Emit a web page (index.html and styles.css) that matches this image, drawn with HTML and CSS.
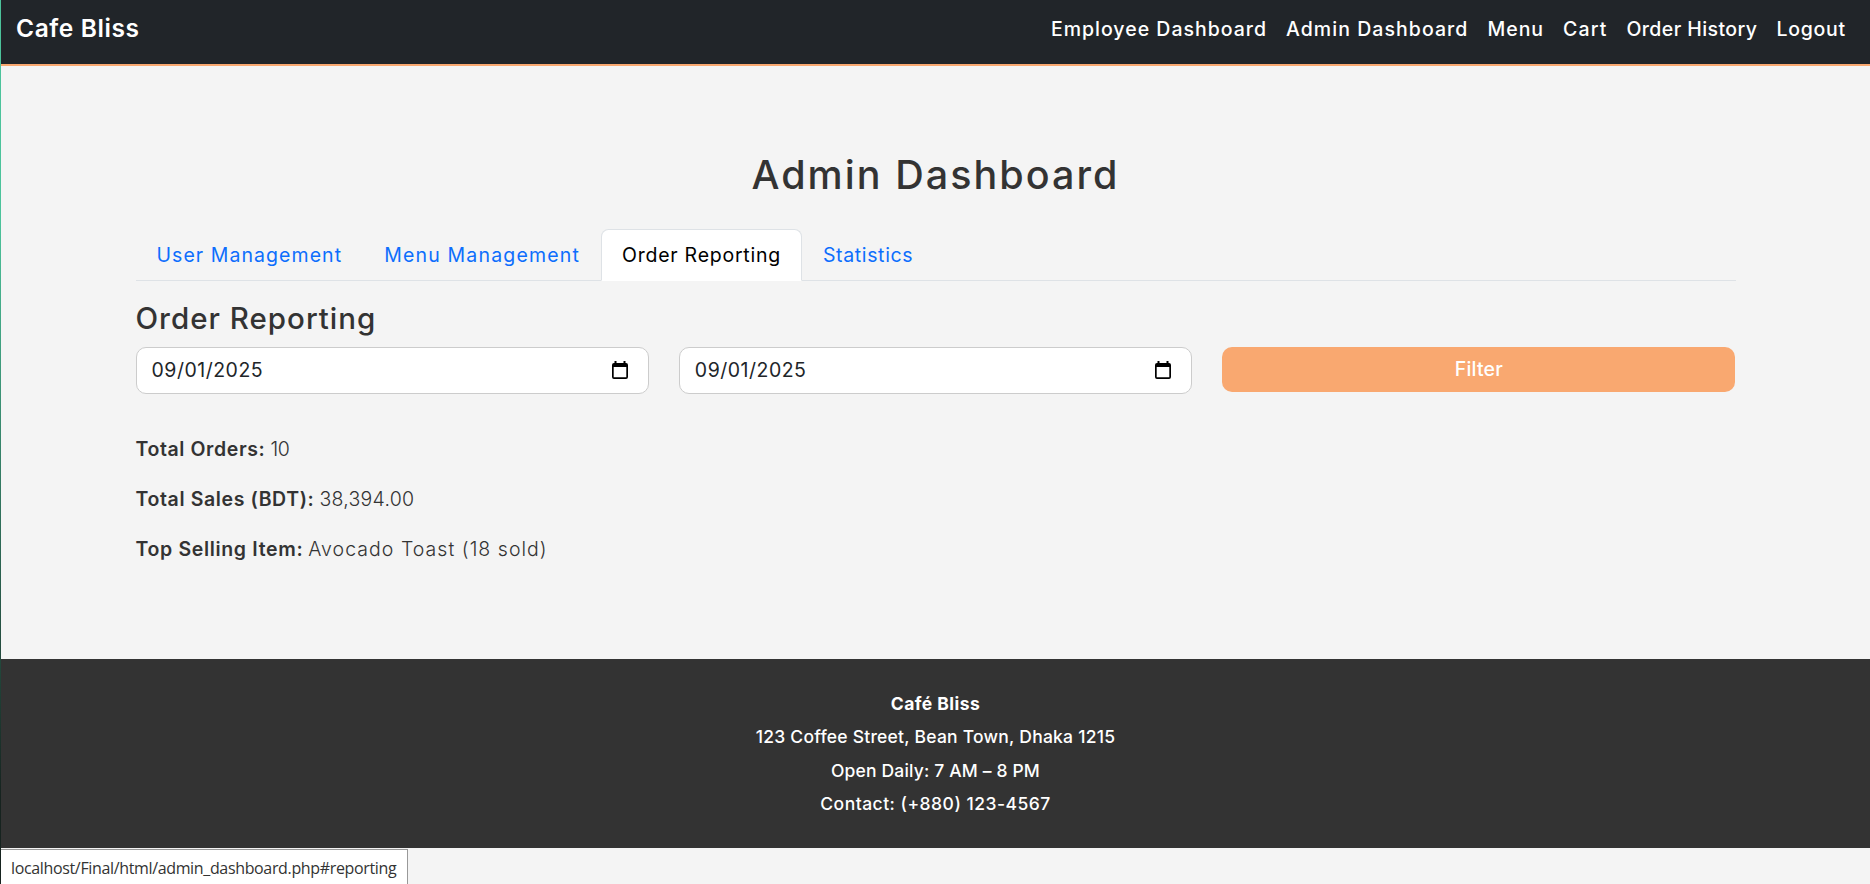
FILE: index.html
```
<!DOCTYPE html>
<html lang="en">
<head>
<meta charset="utf-8">
<title>Cafe Bliss - Admin Dashboard</title>
<link rel="stylesheet" href="styles.css">
</head>
<body>
<nav class="navbar">
  <a class="brand">Cafe Bliss</a>
  <div class="nav-links">
    <a class="l-employee">Employee Dashboard</a>
    <a class="l-admin">Admin Dashboard</a>
    <a class="l-menu">Menu</a>
    <a class="l-cart">Cart</a>
    <a class="l-history">Order History</a>
    <a class="l-logout">Logout</a>
  </div>
</nav>
<main class="container">
  <h2 class="title">Admin Dashboard</h2>
  <div class="tabs">
    <a class="tab t-user">User Management</a>
    <a class="tab t-menu">Menu Management</a>
    <a class="tab t-order active">Order Reporting</a>
    <a class="tab t-stats">Statistics</a>
  </div>
  <h4 class="heading">Order Reporting</h4>
  <form class="filters">
    <div class="date"><span>09/01/2025</span>
      <svg class="cal" viewBox="0 0 16 18"><path d="M2.5 0h2v2h7V0h2v2H14a2 2 0 0 1 2 2v12a2 2 0 0 1-2 2H2a2 2 0 0 1-2-2V4a2 2 0 0 1 2-2h.5zM1.7 6v10.3h12.6V6z" fill-rule="evenodd"/></svg>
    </div>
    <div class="date"><span>09/01/2025</span>
      <svg class="cal" viewBox="0 0 16 18"><path d="M2.5 0h2v2h7V0h2v2H14a2 2 0 0 1 2 2v12a2 2 0 0 1-2 2H2a2 2 0 0 1-2-2V4a2 2 0 0 1 2-2h.5zM1.7 6v10.3h12.6V6z" fill-rule="evenodd"/></svg>
    </div>
    <button class="btn" type="button">Filter</button>
  </form>
  <div class="summary">
    <p><strong class="s-orders">Total Orders:</strong><span class="v-orders">10</span></p>
    <p><strong class="s-sales">Total Sales (BDT):</strong><span class="v-sales">38,394.00</span></p>
    <p><strong class="s-top">Top Selling Item:</strong><span class="v-top">Avocado Toast (18 sold)</span></p>
  </div>
</main>
<footer class="footer">
  <p class="f-name">Café Bliss</p>
  <p class="f-street">123 Coffee Street, Bean Town, Dhaka 1215</p>
  <p class="f-open">Open Daily: 7 AM – 8 PM</p>
  <p class="f-contact">Contact: (+880) 123-4567</p>
</footer>
<div class="edge"></div>
<div class="status">localhost/Final/html/admin_dashboard.php#reporting</div>
</body>
</html>
```
FILE: styles.css
```
* { box-sizing: border-box; }
body {
  margin: 0;
  padding-left: 1px;
  height: 884px;
  overflow: hidden;
  background: #f4f4f4;
  color: #333;
  font: 400 19.5px/30px Inter, "Liberation Sans", sans-serif;
}
h2, h4, p { margin: 0; }

.navbar {
  display: flex;
  justify-content: space-between;
  align-items: flex-start;
  height: 66px;
  padding: 13px 24px 0 15px;
  background: #212529;
  border-bottom: 2px solid #f9a870;
  color: #fff;
}
.brand { font-size: 24.5px; font-weight: 600; letter-spacing: .6px; }
.nav-links { display: flex; gap: 19px; padding-top: 1px; font-weight: 500; }
.l-employee { letter-spacing: 1px; }
.l-admin { letter-spacing: 1.05px; }
.l-menu { letter-spacing: 1px; }
.l-cart { letter-spacing: 1.1px; }
.l-history { letter-spacing: .42px; }
.l-logout { letter-spacing: .75px; }

.container { width: 1600px; margin: 0 auto; padding-top: 85px; height: 593px; }
.title {
  height: 48px;
  margin-bottom: 30px;
  text-align: center;
  font-size: 39.5px;
  line-height: 48px;
  font-weight: 500;
  letter-spacing: 2.05px;
}
.tabs { display: flex; height: 52px; border-bottom: 1px solid #dee2e6; }
.tab {
  height: 52px;
  padding: 10px 20px;
  border: 1px solid transparent;
  border-radius: 7.5px 7.5px 0 0;
  color: #0d6efd;
}
.active { background: #fff; border-color: #dee2e6 #dee2e6 #fff; color: #000; }
.t-user { letter-spacing: 1.06px; }
.t-menu { letter-spacing: 1.18px; }
.t-order { letter-spacing: .75px; }
.t-stats { letter-spacing: .65px; }

.heading {
  margin: 19px 0 11px;
  font-size: 29.5px;
  line-height: 36px;
  font-weight: 500;
  letter-spacing: 1px;
}
.filters { display: grid; grid-template-columns: repeat(3, 1fr); gap: 30px; align-items: start; }
.date {
  display: flex;
  justify-content: space-between;
  align-items: center;
  height: 47px;
  padding: 0 20px 2px 15px;
  background: #fff;
  border: 1px solid #ccc;
  border-radius: 10px;
  color: #212529;
  letter-spacing: .5px;
}
.cal { width: 16px; height: 18px; fill: #000; }
.btn {
  height: 45px;
  padding: 0 0 2px;
  border: 0;
  border-radius: 10px;
  background: #f9a870;
  color: #fff;
  font: inherit;
  font-weight: 500;
  letter-spacing: .2px;
}
.summary { display: grid; gap: 20px; padding-top: 40px; }
.summary p { display: flex; gap: 5px; }
.summary strong { font-weight: 600; }
.summary span { font-weight: 300; }
.s-orders { letter-spacing: .6px; }
.s-sales { letter-spacing: .62px; }
.s-top { letter-spacing: .66px; }
.v-orders { letter-spacing: -.3px; }
.v-sales { letter-spacing: .27px; }
.v-top { letter-spacing: 1.03px; }

.footer {
  height: 189px;
  padding-top: 27.5px;
  background: #333;
  color: #fff;
  text-align: center;
  font-size: 17.5px;
  line-height: 33.5px;
  font-weight: 500;
}
.f-name { font-weight: 700; letter-spacing: .45px; }
.f-street { letter-spacing: .23px; }
.f-open { letter-spacing: .16px; }
.f-contact { letter-spacing: .48px; }

/* Window edge and link preview sit above the page */
.edge {
  position: absolute;
  left: 0;
  top: 0;
  width: 1px;
  height: 884px;
  background: linear-gradient(#4cc39b, #4cc39b 25%, #16231f 90%);
}
.status {
  position: absolute;
  left: 1px;
  bottom: 0;
  width: 407px;
  height: 35px;
  padding: 2px 0 0 10px;
  background: #fff;
  border: 1px solid #999;
  border-width: 1px 1px 0 0;
  font: 400 16px/32px "Open Sans", sans-serif;
  letter-spacing: -.35px;
  white-space: nowrap;
}
```
